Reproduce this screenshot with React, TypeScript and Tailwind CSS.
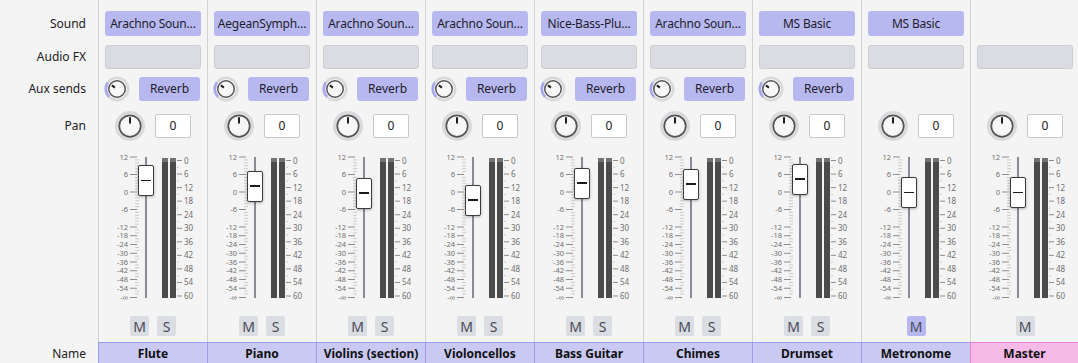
import React from 'react';

type Channel = {
  name: string;
  sound?: string;
  aux?: boolean;
  solo?: boolean;
  muteOn?: boolean;
  fader: number;
  master?: boolean;
};

const channels: Channel[] = [
  { name: 'Flute', sound: 'Arachno Soun…', aux: true, solo: true, fader: 180.5 },
  { name: 'Piano', sound: 'AegeanSymph…', aux: true, solo: true, fader: 186 },
  { name: 'Violins (section)', sound: 'Arachno Soun…', aux: true, solo: true, fader: 193 },
  { name: 'Violoncellos', sound: 'Arachno Soun…', aux: true, solo: true, fader: 200 },
  { name: 'Bass Guitar', sound: 'Nice-Bass-Plu…', aux: true, solo: true, fader: 183 },
  { name: 'Chimes', sound: 'Arachno Soun…', aux: true, solo: true, fader: 184 },
  { name: 'Drumset', sound: 'MS Basic', aux: true, solo: true, fader: 179 },
  { name: 'Metronome', sound: 'MS Basic', muteOn: true, fader: 192.5 },
  { name: 'Master', master: true, fader: 192.5 },
];

// angles in degrees, 0 = straight up, clockwise positive
function arcPath(cx: number, cy: number, r: number, a0: number, a1: number) {
  const pt = (a: number) => [cx + r * Math.sin((a * Math.PI) / 180), cy - r * Math.cos((a * Math.PI) / 180)];
  const [x0, y0] = pt(a0);
  const [x1, y1] = pt(a1);
  const large = Math.abs(a1 - a0) > 180 ? 1 : 0;
  return `M${x0} ${y0} A${r} ${r} 0 ${large} 1 ${x1} ${y1}`;
}

function Knob({ size, ring, inner, angle, arcFrom }: { size: number; ring: number; inner: number; angle: number; arcFrom?: number }) {
  const c = size / 2;
  const rad = (angle * Math.PI) / 180;
  const tip = inner - 2;
  return (
    <svg width={size} height={size} viewBox={`0 0 ${size} ${size}`}>
      <circle cx={c} cy={c} r={ring} fill="none" stroke="#d9d9dd" strokeWidth={size > 28 ? 3 : 2.5} />
      {arcFrom !== undefined && (
        <path d={arcPath(c, c, ring, arcFrom, angle)} fill="none" stroke="#a6a6ee" strokeWidth={size > 28 ? 3 : 2.5} />
      )}
      <circle cx={c} cy={c} r={inner} fill="#f7f7f8" stroke="#555" strokeWidth={size > 28 ? 1.75 : 1.5} />
      <line
        x1={c + 2.5 * Math.sin(rad)}
        y1={c - 2.5 * Math.cos(rad)}
        x2={c + tip * Math.sin(rad)}
        y2={c - tip * Math.cos(rad)}
        stroke="#1e1e1e"
        strokeWidth={2}
      />
    </svg>
  );
}

const dbToY = (db: number) => (db >= -12 ? 192 - db * 2.9167 : 227 + (-12 - db) * 1.4583) - 150;

function FaderScale() {
  const majors = [12, 6, 0, -6, -12, -18, -24, -30, -36, -42, -48, -54];
  const minors: number[] = [];
  for (let d = 11; d > -12; d--) if (d % 6 !== 0) minors.push(d);
  for (let d = -14; d > -55; d -= 2) if (d % 6 !== 0) minors.push(d);
  const infY = 297.5 - 150;
  const rightVals = [0, 6, 12, 18, 24, 30, 36, 42, 48, 54, 60];
  const rY = (v: number) => 160.5 - 150 + v * (135.5 / 60);
  return (
    <svg width={108} height={160} viewBox="0 0 108 160" className="font-['Noto_Sans',sans-serif]">
      {minors.map((d) => (
        <line key={d} x1={36} x2={40} y1={dbToY(d)} y2={dbToY(d)} stroke="#cdcdcd" strokeWidth={1} />
      ))}
      {[291, 294].map((y) => (
        <line key={y} x1={36} x2={40} y1={y - 150} y2={y - 150} stroke="#cdcdcd" strokeWidth={1} />
      ))}
      {majors.map((d) => (
        <g key={d}>
          <line x1={31} x2={38} y1={dbToY(d)} y2={dbToY(d)} stroke="#8d8d8d" strokeWidth={1} />
          <text x={29} y={dbToY(d) + 2.7} fontSize={7.5} fill="#707070" textAnchor="end">
            {d}
          </text>
        </g>
      ))}
      <line x1={31} x2={38} y1={infY} y2={infY} stroke="#8d8d8d" strokeWidth={1} />
      <text x={29} y={infY + 2.7} fontSize={7.5} fill="#707070" textAnchor="end">
        -∞
      </text>
      <rect x={46} y={7} width={2} height={141} fill="#8b8a99" />
      <rect x={63} y={8} width={6} height={140} fill="#4b4b4b" />
      <rect x={71} y={8} width={6} height={140} fill="#4b4b4b" />
      <rect x={63} y={8} width={6} height={4} fill="#727272" />
      <rect x={71} y={8} width={6} height={4} fill="#727272" />
      {rightVals.slice(0, -1).map((v) => (
        <line key={v} x1={78} x2={80} y1={rY(v + 3)} y2={rY(v + 3)} stroke="#cdcdcd" strokeWidth={1} />
      ))}
      {rightVals.map((v) => (
        <g key={v}>
          <line x1={78} x2={83} y1={rY(v)} y2={rY(v)} stroke="#8d8d8d" strokeWidth={1} />
          <text x={85} y={rY(v) + 3} fontSize={8} fill="#707070">
            {v}
          </text>
        </g>
      ))}
    </svg>
  );
}

function Strip({ ch, last }: { ch: Channel; last: boolean }) {
  const handleTop = ch.fader - 15.5 - 150;
  return (
    <div className="flex w-[109px] shrink-0 flex-col">
      <div className="flex h-[342px] flex-col border-l border-[#d2d2d2] px-[6px]">
        <div className="mt-[11px] h-[25px]">
          {ch.sound && (
            <div className="flex h-full w-[96px] items-center justify-center overflow-hidden whitespace-nowrap rounded-[3px] bg-[#b8b8f1] text-[12px] tracking-[-0.2px] text-[#1d1d2b]">
              {ch.sound}
            </div>
          )}
        </div>
        <div className="mt-[9px] h-[24px] w-[96px] rounded-[3px] border border-[#cdced4] bg-[#dadce1]" />
        <div className="mt-[8px] flex h-[24px] items-center">
          {ch.aux && (
            <>
              <div className="-ml-[1px]">
                <Knob size={26} ring={11.25} inner={8.25} angle={-55} arcFrom={-135} />
              </div>
              <div className="ml-[9px] flex h-[24px] w-[61px] items-center justify-center rounded-[3px] bg-[#b8b8f1] text-[12px] text-[#1d1d2b]">
                Reverb
              </div>
            </>
          )}
        </div>
        <div className="mt-[10px] flex h-[30px] items-center">
          <div className="ml-[9px]">
            <Knob size={32} ring={13.5} inner={10.75} angle={0} />
          </div>
          <div className="ml-[9px] flex h-[24px] w-[36px] items-center justify-center rounded-[2px] border border-[#c9c9c9] bg-white text-[12px] text-[#222]">
            0
          </div>
        </div>
        <div className="relative -ml-[6px] mt-[9px] h-[160px]">
          <FaderScale />
          <div
            className="absolute left-[39px] flex h-[31px] w-[16px] items-center justify-center rounded-[2px] border border-[#3c3c3c] bg-white shadow-[0_1px_3px_rgba(0,0,0,0.3)]"
            style={{ top: handleTop }}
          >
            <div className="h-[1.5px] w-[10px] bg-[#1a1a1a]" />
          </div>
        </div>
        <div className="mt-[6px] flex h-[20px] justify-center gap-[8px]">
          <div
            className={`flex w-[19px] items-center justify-center rounded-[2px] text-[14px] text-[#4a4a5a] ${
              ch.muteOn ? 'bg-[#b8b8f1]' : 'bg-[#dadde2]'
            }`}
          >
            M
          </div>
          {ch.solo && (
            <div className="flex w-[19px] items-center justify-center rounded-[2px] bg-[#dadde2] text-[14px] text-[#4a4a5a]">
              S
            </div>
          )}
        </div>
      </div>
      <div
        className={`flex h-[24px] items-center justify-center border-t border-b border-l text-[12px] font-bold text-[#111] ${
          ch.master ? 'border-[#f07fd8] bg-[#f6b9e8]' : 'border-[#9c9cef] bg-[#c9c9f3]'
        } ${last ? 'border-r' : ''}`}
      >
        {ch.name}
      </div>
    </div>
  );
}

export default function App() {
  return (
    <div className="h-[363px] w-[1078px] overflow-hidden bg-[#f4f4f4] font-['Noto_Sans',sans-serif]">
      <div className="flex">
        <div className="flex w-[98px] shrink-0 flex-col pr-[12px] text-right text-[12px] text-[#222]">
          <div className="mt-[11px] flex h-[25px] items-center justify-end">Sound</div>
          <div className="mt-[9px] flex h-[24px] items-center justify-end">Audio FX</div>
          <div className="mt-[8px] flex h-[24px] items-center justify-end">Aux sends</div>
          <div className="mt-[10px] flex h-[30px] items-center justify-end">Pan</div>
          <div className="mt-[201px] flex h-[24px] items-center justify-end">Name</div>
        </div>
        {channels.map((ch, i) => (
          <Strip key={ch.name} ch={ch} last={i === channels.length - 1} />
        ))}
      </div>
    </div>
  );
}
